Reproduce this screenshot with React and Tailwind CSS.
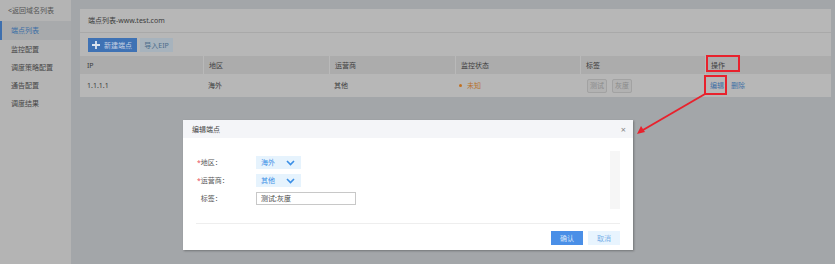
import React from "react";

const font = { fontFamily: '"Noto Sans", "Noto Sans CJK SC", sans-serif' };

const menu = ["监控配置", "调度策略配置", "通告配置", "调度结果"];

const columns = ["IP", "地区", "运营商", "监控状态", "标签", "操作"];

function ChevronDown() {
  return (
    <svg width="9" height="6" viewBox="0 0 9 6" className="text-[#3a8ee6]">
      <path d="M1 1l3.5 3.5L8 1" fill="none" stroke="currentColor" strokeWidth="1.6" />
    </svg>
  );
}

function Select({ value }) {
  return (
    <div className="flex items-center justify-between w-[45px] h-[13px] bg-[#e6f3fd] pl-[5px] pr-[6px] text-[#3a8ee6]">
      <span>{value}</span>
      <ChevronDown />
    </div>
  );
}

export default function App() {
  return (
    <div
      className="relative flex w-[835px] h-[264px] overflow-hidden bg-[#a3a6a9] text-[7px] leading-none"
      style={font}
    >
      {/* Sidebar */}
      <div className="w-[71px] shrink-0 bg-[#b4b4b4] text-[#474747]">
        <div className="h-[21px] flex items-center pl-[8px] text-[#555]">&lt;返回域名列表</div>
        <div className="h-[19px] flex items-center pl-[9px] bg-[#a8aaac] border-l-2 border-[#3d6fae] text-[#3d6fa6]">
          端点列表
        </div>
        {menu.map((item) => (
          <div key={item} className="h-[18px] flex items-center pl-[11px]">
            {item}
          </div>
        ))}
      </div>

      {/* Main */}
      <div className="flex-1 pl-[9px] pt-[9px] pr-[4px]">
        <div className="bg-[#b7b7b7]">
          <div className="h-[24px] flex items-center pl-[8px] border-b border-[#a9a9a9] text-[#3c3c3c]">
            端点列表-www.test.com
          </div>
          <div className="flex gap-[3px] px-[8px] pt-[5px] pb-[4px]">
            <button className="flex items-center gap-[4px] h-[14px] w-[49px] pl-[4px] bg-[#3f72b4] text-[#c5d1e2]">
              <svg width="8" height="8" viewBox="0 0 8 8">
                <path d="M4 0v8M0 4h8" stroke="#dde5ef" strokeWidth="1.8" />
              </svg>
              新建端点
            </button>
            <button className="h-[14px] w-[33px] bg-[#a7b3bd] text-[#4b6c8a]">导入EIP</button>
          </div>

          {/* Table */}
          <div className="grid grid-cols-[123px_126px_126px_125px_125px_1fr] h-[18px] bg-[#acacac] text-[#3c3c3c]">
            {columns.map((c, i) => (
              <div
                key={c}
                className={`flex items-center ${i === 0 ? "pl-[7px]" : "pl-[5px] border-l border-[#b9b9b9]"}`}
              >
                {c}
              </div>
            ))}
          </div>
          <div className="grid grid-cols-[123px_126px_126px_125px_125px_1fr] h-[23px] text-[#3c3c3c]">
            <div className="flex items-center pl-[7px]">1.1.1.1</div>
            <div className="flex items-center pl-[5px]">海外</div>
            <div className="flex items-center pl-[5px]">其他</div>
            <div className="flex items-center pl-[4px] gap-[5px] text-[#b8722f]">
              <span className="w-[3px] h-[3px] rounded-full bg-[#c2701f]" />
              未知
            </div>
            <div className="flex items-center pl-[7px] gap-[5px] text-[#8a8a8a]">
              <span className="h-[14px] px-[2px] flex items-center border border-[#a2a2a2] rounded-[2px] bg-[#b2b2b2]">测试</span>
              <span className="h-[14px] px-[2px] flex items-center border border-[#a2a2a2] rounded-[2px] bg-[#b2b2b2]">灰度</span>
            </div>
            <div className="flex items-center pl-[5px] gap-[7px] text-[#3e6fa5]">
              <span>编辑</span>
              <span>删除</span>
            </div>
          </div>
        </div>
      </div>

      {/* Annotation boxes */}
      <div className="absolute left-[706px] top-[55px] w-[34px] h-[17px] border-2 border-[#e8222d]" />
      <div className="absolute left-[704px] top-[75px] w-[23px] h-[20px] border-2 border-[#e8222d]" />
      <svg className="absolute left-0 top-0" width="835" height="264">
        <line x1="705" y1="94" x2="643" y2="130" stroke="#e8222d" strokeWidth="2" />
        <path d="M637 134l4-8 4 6z" fill="#e8222d" />
      </svg>

      {/* Modal */}
      <div className="absolute left-[183px] top-[120px] w-[450px] h-[130px] bg-white shadow-[1px_1px_2px_rgba(0,0,0,0.3)] text-[#555]">
        <div className="h-[18px] flex items-center justify-between pl-[9px] pr-[7px] bg-[#f4f5f8] text-[#444]">
          <span>编辑端点</span>
          <span className="text-[9px] text-[#888]">×</span>
        </div>
        <div className="h-[85px] flex px-[13px] pt-[13px]">
          <div className="flex flex-col gap-[5px] pt-[5px]">
            <div className="flex items-center">
              <div className="w-[60px] pl-[1px]">
                <span className="text-[#e8505a]">*</span>地区：
              </div>
              <Select value="海外" />
            </div>
            <div className="flex items-center">
              <div className="w-[60px] pl-[1px]">
                <span className="text-[#e8505a]">*</span>运营商：
              </div>
              <Select value="其他" />
            </div>
            <div className="flex items-center">
              <div className="w-[60px] pl-[1px]">
                <span className="invisible">*</span>标签：
              </div>
              <div className="w-[100px] h-[13px] flex items-center pl-[4px] border border-[#c8c8c8] text-[#444]">
                测试;灰度
              </div>
            </div>
          </div>
          <div className="ml-auto w-[10px] h-[58px] bg-[#f6f6f6]" />
        </div>
        <div className="mx-[13px] border-t border-[#eeeeee] flex justify-end gap-[5px] pt-[7px]">
          <button className="w-[32px] h-[14px] bg-[#4a8fe7] text-[#d6e6fa]">确认</button>
          <button className="w-[32px] h-[14px] bg-[#e8f4fe] text-[#78b0e8]">取消</button>
        </div>
      </div>
    </div>
  );
}
